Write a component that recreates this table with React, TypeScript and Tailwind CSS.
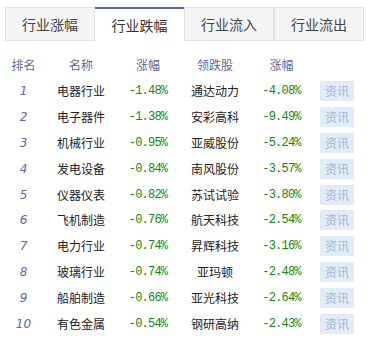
import React from "react";

const tabs = ["行业涨幅", "行业跌幅", "行业流入", "行业流出"];

const rows = [
  { name: "电器行业", chg: "-1.48%", stock: "通达动力", schg: "-4.08%" },
  { name: "电子器件", chg: "-1.38%", stock: "安彩高科", schg: "-9.49%" },
  { name: "机械行业", chg: "-0.95%", stock: "亚威股份", schg: "-5.24%" },
  { name: "发电设备", chg: "-0.84%", stock: "南风股份", schg: "-3.57%" },
  { name: "仪器仪表", chg: "-0.82%", stock: "苏试试验", schg: "-3.80%" },
  { name: "飞机制造", chg: "-0.76%", stock: "航天科技", schg: "-2.54%" },
  { name: "电力行业", chg: "-0.74%", stock: "昇辉科技", schg: "-3.16%" },
  { name: "玻璃行业", chg: "-0.74%", stock: "亚玛顿", schg: "-2.48%" },
  { name: "船舶制造", chg: "-0.66%", stock: "亚光科技", schg: "-2.64%" },
  { name: "有色金属", chg: "-0.54%", stock: "钢研高纳", schg: "-2.43%" },
];

const cols = "grid grid-cols-[47px_68px_66px_68px_65px_46px] items-center";
const pct = "text-center text-[12px] tracking-[-0.8px] text-[#118811] [font-family:'Liberation_Mono',monospace]";

export default function App() {
  const active = 1;
  return (
    <div className="w-[367px] h-[342px] bg-white [font-family:'Noto_Sans_CJK_SC',sans-serif]">
      <div className="pt-[7px] pl-[5px] flex">
        {tabs.map((t, i) => (
          <div
            key={t}
            className={
              i === active
                ? "w-[89px] h-[34px] flex items-center justify-center text-[14px] text-[#333] bg-white border-t-2 border-t-[#5566a0]"
                : "w-[90px] h-[34px] flex items-center justify-center text-[14px] text-[#444] bg-[#f5f5f5] border border-[#e2e2e2] " +
                  (i === active + 1 ? "border-l-[#e2e2e2]" : "")
            }
          >
            {t}
          </div>
        ))}
      </div>

      <div className={`${cols} h-[26px] mt-[11px] text-[12px] text-[#5b6b9b]`}>
        <div className="text-center">排名</div>
        <div className="text-center">名称</div>
        <div className="text-center">涨幅</div>
        <div className="text-center">领跌股</div>
        <div className="text-center">涨幅</div>
        <div />
      </div>

      {rows.map((r, i) => (
        <div key={r.name} className={`${cols} h-[25.9px]`}>
          <div className="text-center text-[12px] italic text-[#5b6b9b] [font-family:'DejaVu_Sans',sans-serif]">
            {i + 1}
          </div>
          <div className="text-center text-[12px] text-[#222]">{r.name}</div>
          <div className={pct}>{r.chg}</div>
          <div className="text-center text-[12px] text-[#222]">{r.stock}</div>
          <div className={pct}>{r.schg}</div>
          <div className="flex justify-center">
            <span className="w-[34px] h-[20px] flex items-center justify-center bg-[#e2ecf7] text-[12px] text-[#9fb7d6]">
              资讯
            </span>
          </div>
        </div>
      ))}
    </div>
  );
}
